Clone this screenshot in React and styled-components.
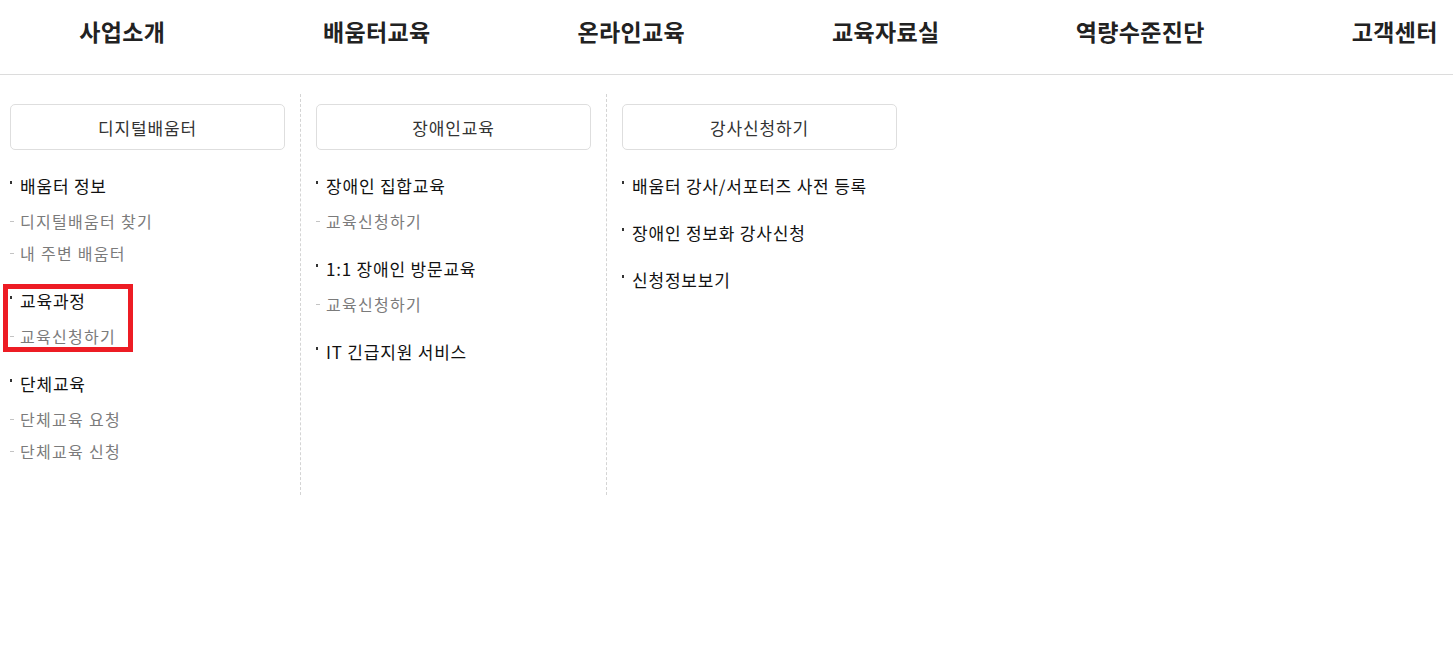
import React from "react";
import styled, { createGlobalStyle } from "styled-components";

const GlobalStyle = createGlobalStyle`
  html, body {
    margin: 0;
    padding: 0;
    background: #fff;
    overflow: hidden;
  }
  body {
    font-family: "Noto Sans CJK KR", "Noto Sans", sans-serif;
    color: #222;
  }
  *, *::before, *::after { box-sizing: border-box; }
  ul { list-style: none; margin: 0; padding: 0; }
`;

const Page = styled.div`
  width: 100%;
  overflow: hidden;
`;

const Header = styled.header`
  height: 75px;
  border-bottom: 1px solid #dcdcdc;
`;

const Nav = styled.nav`
  display: grid;
  grid-template-columns: repeat(6, 254.5px);
  margin-left: -5px;
  padding-top: 16px;
`;

const NavItem = styled.a`
  text-align: center;
  font-size: 23px;
  font-weight: 700;
  line-height: 30px;
  color: #222;
  text-decoration: none;
  letter-spacing: 0.3px;
`;

const Panel = styled.div`
  display: flex;
  margin-left: -5px;
  padding-top: 19px;
`;

const Column = styled.section`
  width: ${(p) => (p.$first ? "305px" : "306px")};
  padding: 10px 15px 11px;
  border-left: ${(p) => (p.$first ? "none" : "1px dashed #d4d4d4")};
`;

const Title = styled.div`
  width: 275px;
  height: 46px;
  border: 1px solid #dedede;
  border-radius: 5px;
  display: flex;
  align-items: center;
  justify-content: center;
  font-size: 17px;
  letter-spacing: 0.9px;
  color: #333;
  margin-bottom: 21px;
`;

const Group = styled.li`
  position: relative;
  margin-bottom: 17px;

  ${(p) =>
    p.$marked &&
    `
    &::after {
      content: "";
      position: absolute;
      left: -7px;
      top: -2px;
      width: 130px;
      height: 68px;
      border: 5px solid #ed1c24;
      pointer-events: none;
    }
  `}
`;

const Heading = styled.a`
  display: block;
  position: relative;
  padding-left: 10px;
  font-size: 17px;
  font-weight: 400;
  line-height: 30px;
  color: #111;
  text-decoration: none;
  letter-spacing: 0.8px;

  &::before {
    content: "";
    position: absolute;
    left: 0;
    top: 10px;
    width: 2px;
    height: 3px;
    background: #333;
  }
`;

const SubList = styled.ul`
  padding-top: 4px;
`;

const SubItem = styled.li`
  position: relative;
  padding-left: 10px;
  font-size: 16px;
  line-height: 32px;
  color: #7b7b7b;
  letter-spacing: 1.3px;

  &::before {
    content: "";
    position: absolute;
    left: 0;
    top: 16px;
    width: 4px;
    height: 1px;
    background: #c4c4c4;
  }
`;

const navItems = ["사업소개", "배움터교육", "온라인교육", "교육자료실", "역량수준진단", "고객센터"];

const columns = [
  {
    title: "디지털배움터",
    groups: [
      { heading: "배움터 정보", subs: ["디지털배움터 찾기", "내 주변 배움터"] },
      { heading: "교육과정", subs: ["교육신청하기"], marked: true },
      { heading: "단체교육", subs: ["단체교육 요청", "단체교육 신청"] },
    ],
  },
  {
    title: "장애인교육",
    groups: [
      { heading: "장애인 집합교육", subs: ["교육신청하기"] },
      { heading: "1:1 장애인 방문교육", subs: ["교육신청하기"] },
      { heading: "IT 긴급지원 서비스", subs: [] },
    ],
  },
  {
    title: "강사신청하기",
    groups: [
      { heading: "배움터 강사/서포터즈 사전 등록", subs: [] },
      { heading: "장애인 정보화 강사신청", subs: [] },
      { heading: "신청정보보기", subs: [] },
    ],
  },
];

export default function App() {
  return (
    <Page>
      <GlobalStyle />
      <Header>
        <Nav>
          {navItems.map((n) => (
            <NavItem key={n}>{n}</NavItem>
          ))}
        </Nav>
      </Header>
      <Panel>
        {columns.map((c, i) => (
          <Column key={c.title} $first={i === 0}>
            <Title>{c.title}</Title>
            <ul>
              {c.groups.map((g) => (
                <Group key={g.heading} $marked={g.marked}>
                  <Heading>{g.heading}</Heading>
                  {g.subs.length > 0 && (
                    <SubList>
                      {g.subs.map((s) => (
                        <SubItem key={s}>{s}</SubItem>
                      ))}
                    </SubList>
                  )}
                </Group>
              ))}
            </ul>
          </Column>
        ))}
      </Panel>
    </Page>
  );
}
